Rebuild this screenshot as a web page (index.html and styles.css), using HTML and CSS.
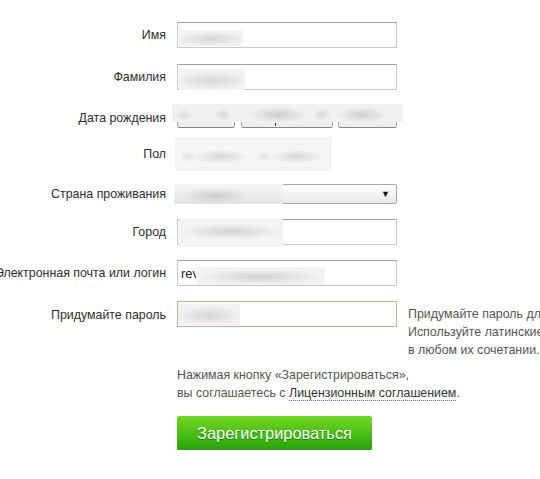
FILE: index.html
```html
<!DOCTYPE html>
<html lang="ru">
<head>
    <meta charset="UTF-8">
    <meta name="viewport" content="width=device-width, initial-scale=1.0">
    <title>Регистрация</title>
    <link rel="stylesheet" href="styles.css">
</head>
<body>
    <form class="reg-form" onsubmit="return false">
        <div class="row">
            <label class="row-label">Имя</label>
            <div class="input"><span class="blur blur--name"></span></div>
        </div>

        <div class="row">
            <label class="row-label">Фамилия</label>
            <div class="input"><span class="blur blur--surname"></span></div>
        </div>

        <div class="row row--date">
            <label class="row-label">Дата рождения</label>
            <div class="date-selects">
                <div class="select-btn select-btn--day"></div>
                <div class="select-btn select-btn--month"><span class="tick"></span></div>
                <div class="select-btn select-btn--year"></div>
                <span class="blur blur--date"></span>
            </div>
        </div>

        <div class="row row--gender">
            <label class="row-label">Пол</label>
            <div class="gender">
                <span class="blur blur--gender"></span>
            </div>
        </div>

        <div class="row row--country">
            <label class="row-label">Страна проживания</label>
            <div class="select">
                <span class="select-arrow">▼</span>
                <span class="blur blur--country"></span>
            </div>
        </div>

        <div class="row row--city">
            <label class="row-label">Город</label>
            <div class="input"><span class="blur blur--city"></span></div>
        </div>

        <div class="row row--email">
            <label class="row-label">Электронная почта или логин</label>
            <div class="input"><span class="input-text">rev</span><span class="blur blur--email"></span></div>
        </div>

        <div class="row row--password">
            <label class="row-label">Придумайте пароль</label>
            <div class="input input--focus"><span class="blur blur--password"></span></div>
            <p class="hint">
                Придумайте пароль для входа в почту.<br>
                Используйте латинские буквы и цифры<br>
                в любом их сочетании.
            </p>
        </div>

        <p class="agreement">
            Нажимая кнопку «Зарегистрироваться»,<br>
            вы соглашаетесь с <a href="#" class="license-link">Лицензионным соглашением</a>.
        </p>

        <button type="submit" class="submit-btn">Зарегистрироваться</button>
    </form>
</body>
</html>
```

FILE: styles.css
```css
* {
    margin: 0;
    padding: 0;
    box-sizing: border-box;
}

html, body {
    overflow: hidden;
}

body {
    font-family: "Liberation Sans", Arial, sans-serif;
    font-size: 12.4px;
    color: #333;
    background: #fff;
}

.reg-form {
    padding-top: 22px;
}

/* rows */
.row {
    display: flex;
    align-items: center;
    margin-bottom: 16px;
}

.row--date {
    margin-bottom: 9px;
}

.row--gender {
    margin-bottom: 13px;
}

.row--country,
.row--city,
.row--email {
    margin-bottom: 15px;
}

.row--password {
    align-items: flex-start;
    margin-bottom: 0;
}

.row-label {
    width: 166px;
    flex-shrink: 0;
    display: flex;
    justify-content: flex-end;
    white-space: nowrap;
    line-height: 16px;
    margin-right: 11px;
    color: #2e2e2e;
}

.row--date .row-label {
    padding-top: 1px;
}

.row--password .row-label {
    padding-top: 6px;
}

/* fields */
.input {
    position: relative;
    flex-shrink: 0;
    width: 220px;
    height: 26px;
    border: 1px solid #c8c8c8;
    border-top-color: #a0a0a0;
    display: flex;
    align-items: center;
    padding-left: 3px;
    background: #fff;
}

.input--focus {
    border-color: #a9c196;
}

.input-text {
    font-size: 13px;
    color: #222;
}

.date-selects {
    position: relative;
    flex-shrink: 0;
    display: flex;
    width: 220px;
    height: 22px;
}

.select-btn {
    height: 22px;
    border: 1px solid #aaa;
    border-bottom-color: #888;
    border-radius: 2px;
    background: linear-gradient(#fff, #ececec);
    position: relative;
}

.select-btn--day {
    width: 58px;
    margin-right: 6px;
}

.select-btn--month {
    width: 92px;
    margin-right: 5px;
}

.select-btn--year {
    width: 59px;
}

.tick {
    position: absolute;
    left: 33px;
    bottom: 1px;
    width: 1px;
    height: 3px;
    background: #334;
}

.gender {
    position: relative;
    flex-shrink: 0;
    width: 220px;
    height: 34px;
}

.select {
    position: relative;
    flex-shrink: 0;
    width: 220px;
    height: 20px;
    border: 1px solid #a6a6a6;
    border-radius: 2px;
    background: linear-gradient(#fff, #e9e9e9);
    display: flex;
    justify-content: flex-end;
    align-items: center;
    padding-right: 6px;
}

.select-arrow {
    font-size: 9px;
    color: #111;
}

/* privacy blur patches */
.blur {
    position: absolute;
    background:
        radial-gradient(ellipse 55% 45% at 50% 55%, #d6d6d6 0%, #e4e4e4 50%, rgba(243, 243, 243, 0) 100%),
        #f3f3f3;
}

.blur--name {
    left: 1px;
    top: 7px;
    width: 64px;
    height: 16px;
}

.blur--surname {
    left: 1px;
    top: 4px;
    width: 66px;
    height: 21px;
}

.blur--date {
    left: -5px;
    top: -2px;
    width: 231px;
    height: 18px;
    background:
        radial-gradient(ellipse 4% 35% at 5% 60%, #dcdcdc 0%, rgba(226, 226, 226, 0) 100%),
        radial-gradient(ellipse 4% 35% at 22% 60%, #d8d8d8 0%, rgba(226, 226, 226, 0) 100%),
        radial-gradient(ellipse 13% 45% at 46% 60%, #cdcdcd 0%, rgba(226, 226, 226, 0) 100%),
        radial-gradient(ellipse 4% 35% at 65% 60%, #d8d8d8 0%, rgba(226, 226, 226, 0) 100%),
        radial-gradient(ellipse 11% 45% at 82% 60%, #cfcfcf 0%, rgba(226, 226, 226, 0) 100%),
        #f1f1f1;
}

.blur--gender {
    left: -2px;
    top: 0;
    width: 157px;
    height: 34px;
    background:
        radial-gradient(ellipse 5% 16% at 8% 58%, #e0e0e0 0%, rgba(230, 230, 230, 0) 100%),
        radial-gradient(ellipse 18% 20% at 29% 58%, #d6d6d6 0%, rgba(230, 230, 230, 0) 100%),
        radial-gradient(ellipse 5% 16% at 57% 58%, #e0e0e0 0%, rgba(230, 230, 230, 0) 100%),
        radial-gradient(ellipse 17% 20% at 78% 58%, #d6d6d6 0%, rgba(230, 230, 230, 0) 100%),
        #f5f5f5;
}

.blur--country {
    left: -4px;
    top: -1px;
    width: 109px;
    height: 20px;
    background:
        radial-gradient(ellipse 32% 45% at 38% 60%, #cdcdcd 0%, rgba(226, 226, 226, 0) 100%),
        linear-gradient(#f6f6f6, #e6e6e6);
}

.blur--city {
    left: 1px;
    top: -1px;
    width: 104px;
    height: 28px;
    background:
        radial-gradient(ellipse 48% 28% at 50% 45%, #d2d2d2 0%, rgba(230, 230, 230, 0) 100%),
        #f4f4f4;
}

.blur--email {
    left: 18px;
    top: 6px;
    width: 129px;
    height: 18px;
    background:
        radial-gradient(ellipse 50% 42% at 50% 55%, #d2d2d2 0%, rgba(230, 230, 230, 0) 100%),
        #f3f3f3;
}

.blur--password {
    left: 0;
    top: 2px;
    width: 62px;
    height: 21px;
}

/* hint and agreement */
.hint {
    flex-shrink: 0;
    margin-left: 11px;
    margin-top: 4px;
    line-height: 18px;
    white-space: nowrap;
    color: #555;
}

.agreement {
    margin: 7px 0 0 177px;
    line-height: 18px;
    color: #555;
}

.license-link {
    color: #333;
    text-decoration: none;
    border-bottom: 1px dotted #666;
}

.submit-btn {
    display: block;
    margin: 14px 0 0 177px;
    width: 195px;
    height: 34px;
    border: none;
    border-radius: 2px;
    background: linear-gradient(#72d724, #49bd14 55%, #27a00a);
    box-shadow: 0 1px 0 #239008;
    color: #fff;
    font-family: "Liberation Sans", Arial, sans-serif;
    font-size: 16.4px;
    text-shadow: 0 1px 1px rgba(0, 60, 0, 0.55);
    cursor: pointer;
}
```
